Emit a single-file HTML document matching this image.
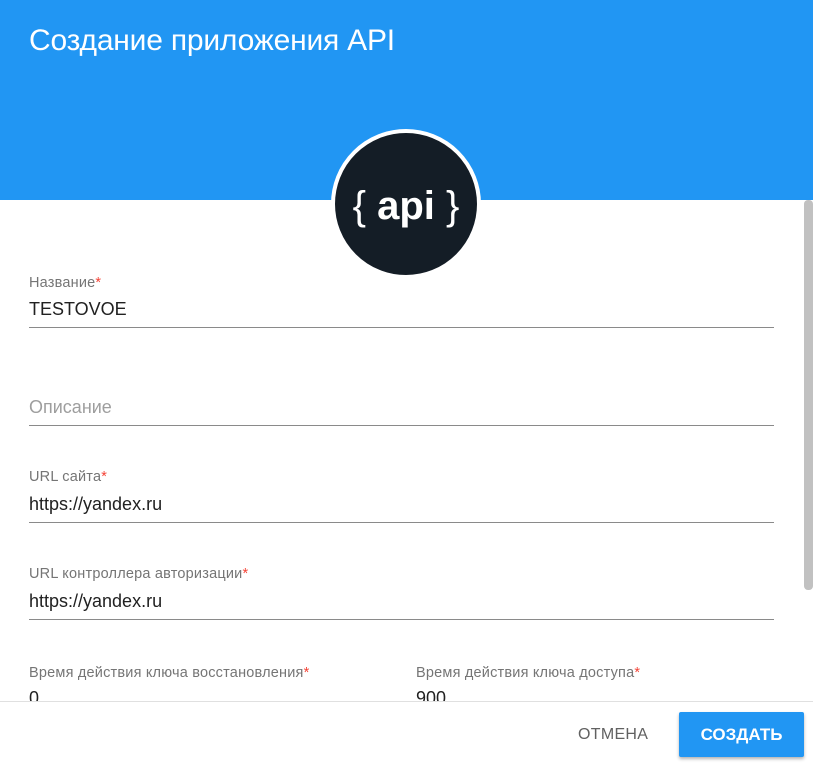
<html><head><style>
body{margin:0;width:813px;height:763px;overflow:hidden;background:#fff;font-family:"Liberation Sans",sans-serif;position:relative}
.hdr{position:absolute;left:0;top:0;width:813px;height:200px;background:#2196F3}
.title{position:absolute;left:29px;top:24px;color:#fff;font-size:30px;letter-spacing:-0.2px}
.circ{position:absolute;left:331px;top:129px;width:142px;height:142px;border-radius:50%;background:#141d26;border:4px solid #fff;color:#fff;font-size:40px;text-align:center;line-height:146px;font-weight:bold}
.circ span{font-weight:normal;font-size:40px}
.lab{position:absolute;font-size:14.5px;color:#757575;letter-spacing:0.2px}
.lab i{color:#f44336;font-style:normal}
.val{position:absolute;font-size:18px;color:#212121}
.ln{position:absolute;left:29px;width:745px;height:1px;background:#8a8a8a}
.sb{position:absolute;left:804px;top:200px;width:9px;height:390px;background:#c1c1c1;border-radius:4px}
.foot{position:absolute;left:0;top:701px;width:813px;height:62px;background:#fff;border-top:1px solid #e0e0e0}
.cancel{position:absolute;left:578px;top:726px;font-size:16px;color:#616161;letter-spacing:0.3px}
.ok{position:absolute;left:679px;top:712px;width:125px;height:45px;background:#2196F3;color:#fff;font-size:17px;font-weight:bold;text-align:center;line-height:45px;border-radius:2px;box-shadow:0 2px 3px rgba(0,0,0,.3)}
</style></head><body>
<div class="hdr"><div class="title">Создание приложения API</div></div>
<div class="circ"><span>{</span> api <span>}</span></div>
<div class="sb"></div>
<div class="lab" style="left:29px;top:275px">Название<i>*</i></div>
<div class="val" style="left:29px;top:299px">TESTOVOE</div>
<div class="ln" style="top:327px"></div>
<div class="val" style="left:29px;top:397px;color:#9e9e9e;font-size:18px">Описание</div>
<div class="ln" style="top:425px"></div>
<div class="lab" style="left:29px;top:469px">URL сайта<i>*</i></div>
<div class="val" style="left:29px;top:494px">https://yandex.ru</div>
<div class="ln" style="top:522px"></div>
<div class="lab" style="left:29px;top:566px">URL контроллера авторизации<i>*</i></div>
<div class="val" style="left:29px;top:591px">https://yandex.ru</div>
<div class="ln" style="top:619px"></div>
<div class="lab" style="left:29px;top:665px">Время действия ключа восстановления<i>*</i></div>
<div class="val" style="left:29px;top:688px">0</div>
<div class="lab" style="left:416px;top:665px">Время действия ключа доступа<i>*</i></div>
<div class="val" style="left:416px;top:688px">900</div>
<div class="foot"></div>
<div class="cancel">ОТМЕНА</div>
<div class="ok">СОЗДАТЬ</div>
</body></html>
